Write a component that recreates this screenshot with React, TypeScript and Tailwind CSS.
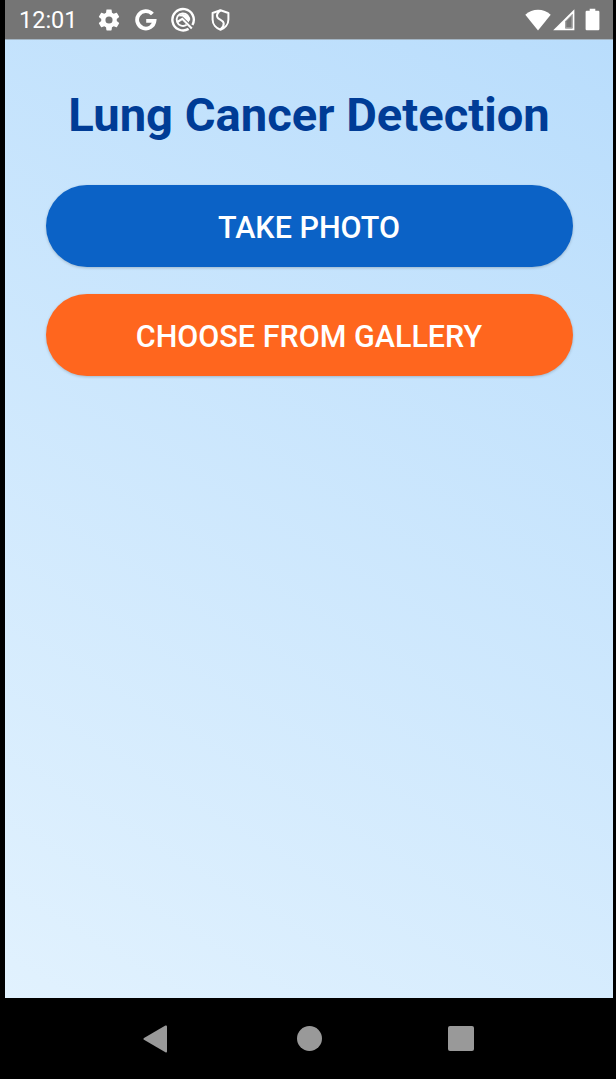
function StatusBar() {
  return (
    <header className="flex h-[39px] shrink-0 items-center bg-[#757575] pl-[14px] pr-[13px] text-white">
      <span className="w-[60px] whitespace-nowrap text-[23.5px] leading-[39px] pt-[2px]">12:01</span>
      <svg className="ml-[17px] h-[26px] w-[26px] shrink-0" viewBox="0 0 24 24" fill="currentColor">
        <path d="M19.14 12.94c.04-.3.06-.61.06-.94 0-.32-.02-.64-.07-.94l2.03-1.58c.18-.14.23-.41.12-.61l-1.92-3.32c-.12-.22-.37-.29-.59-.22l-2.39.96c-.5-.38-1.03-.7-1.62-.94l-.36-2.54c-.04-.24-.24-.41-.48-.41h-3.84c-.24 0-.43.17-.47.41l-.36 2.54c-.59.24-1.13.57-1.62.94l-2.39-.96c-.22-.08-.47 0-.59.22L2.74 8.87c-.12.21-.08.47.12.61l2.03 1.58c-.05.3-.09.63-.09.94s.02.64.07.94l-2.03 1.58c-.18.14-.23.41-.12.61l1.92 3.32c.12.22.37.29.59.22l2.39-.96c.5.38 1.03.7 1.62.94l.36 2.54c.05.24.24.41.48.41h3.84c.24 0 .44-.17.47-.41l.36-2.54c.59-.24 1.13-.56 1.62-.94l2.39.96c.22.08.47 0 .59-.22l1.92-3.32c.12-.22.07-.47-.12-.61l-2.01-1.58zM12 15.3A3.3 3.3 0 1 1 12 8.7a3.3 3.3 0 0 1 0 6.6z" />
      </svg>
      <svg className="ml-[13px] h-[22px] w-[22px] shrink-0" viewBox="0 0 22 22" fill="none" stroke="currentColor" strokeWidth="3.8">
        <path d="M17.4 5.1A8.7 8.7 0 1 0 19.5 11.8H11.2" />
      </svg>
      <svg className="ml-[13px] h-[26px] w-[26px] shrink-0" viewBox="0 0 26 26" fill="none" stroke="currentColor">
        <path d="M18.6 21.9A10.7 10.7 0 1 1 22.4 18" strokeWidth="2.4" />
        <path d="M16.6 17.8A6.3 6.3 0 1 1 19.2 13.6" strokeWidth="1.8" />
        <path d="M8.4 9.2A6.2 6.2 0 0 1 18.8 15.6L12.6 9.6Z" fill="currentColor" stroke="none" />
        <path d="M7.4 15L12.3 11.8L21.8 21.4" strokeWidth="2.2" />
      </svg>
      <svg className="ml-[15px] h-[22px] w-[19px] shrink-0" viewBox="0 0 19 22" fill="none" stroke="currentColor" strokeWidth="2" strokeLinejoin="round">
        <path d="M9.5 1.2L17.4 4V10.5C17.4 15.3 13.9 19.2 9.5 20.7C5.1 19.2 1.6 15.3 1.6 10.5V4Z" />
        <path d="M9.5 1.4C6.6 3.6 5.2 6 6.5 8.4C7.7 10.6 12.2 10.9 12.7 14.1C13 16.3 11.5 18.6 9.5 20.2" />
      </svg>
      <svg className="ml-auto h-[22px] w-[26px] shrink-0" viewBox="0 0 26 22" fill="currentColor">
        <path d="M.3 5.8C7.4-.8 18.6-.8 25.7 5.8L13 21.4Z" />
      </svg>
      <svg className="ml-[2px] h-[22px] w-[22px] shrink-0" viewBox="0 0 22 22">
        <path d="M21.4.2V21.3H.2Z" fill="currentColor" />
        <path d="M19.6 9.2V19.4H12.2V12.2L19.6 4.8Z" fill="#757575" />
        <path d="M19 8.5V18.8H12.8V12.4L19 6.2Z" fill="none" stroke="#a9a9a9" strokeWidth="1" />
      </svg>
      <svg className="ml-[10px] h-[23px] w-[15px] shrink-0" viewBox="0 0 15 23" fill="currentColor">
        <path d="M4.7 .7H10.3V2.8H13.2Q14.4 2.8 14.4 4V21.1Q14.4 22.3 13.2 22.3H1.8Q.6 22.3 .6 21.1V4Q.6 2.8 1.8 2.8H4.7Z" />
      </svg>
    </header>
  );
}

function NavigationBar() {
  return (
    <nav className="flex h-[81px] shrink-0 items-center bg-black pl-[138px] text-[#999999]">
      <button aria-label="Back">
        <svg className="h-[28px] w-[25px]" viewBox="0 0 25 28" fill="currentColor">
          <path d="M1 13.1L22.4.6Q24 .1 24 1.6V26.4Q24 27.9 22.4 27.3L1 14.7Q-.1 13.9 1 13.1Z" />
        </svg>
      </button>
      <button aria-label="Home" className="ml-[128.5px] h-[25px] w-[25px] rounded-full bg-[#999999]" />
      <button aria-label="Recent apps" className="ml-[126.5px] h-[25px] w-[26px] rounded-[2px] bg-[#999999]" />
    </nav>
  );
}

export default function App() {
  return (
    <div className="flex h-[1079px] w-[616px] flex-col overflow-hidden bg-black pl-[5px] pr-[3px] font-['Roboto',sans-serif]">
      <StatusBar />
      <main className="flex flex-1 flex-col border-t border-[#a3b5c4] bg-[linear-gradient(31deg,#e2f2fe_-2%,#b9ddfc_100%)] px-[40.5px] pt-[46.6px]">
        <h1 className="whitespace-nowrap text-center text-[47.15px] font-bold leading-[56px] text-[#003c96]">
          Lung Cancer Detection
        </h1>
        <button className="mt-[42px] h-[82px] rounded-full bg-[#0b62c6] pt-[4px] text-[30.5px] leading-[44px] font-medium text-white shadow-[0_1px_3px_rgba(0,0,0,0.2)]">
          TAKE PHOTO
        </button>
        <button className="mt-[27px] h-[82px] rounded-full bg-[#ff661e] pt-[4px] text-[30.5px] leading-[44px] font-medium text-white shadow-[0_1px_3px_rgba(0,0,0,0.2)]">
          CHOOSE FROM GALLERY
        </button>
      </main>
      <NavigationBar />
    </div>
  );
}
